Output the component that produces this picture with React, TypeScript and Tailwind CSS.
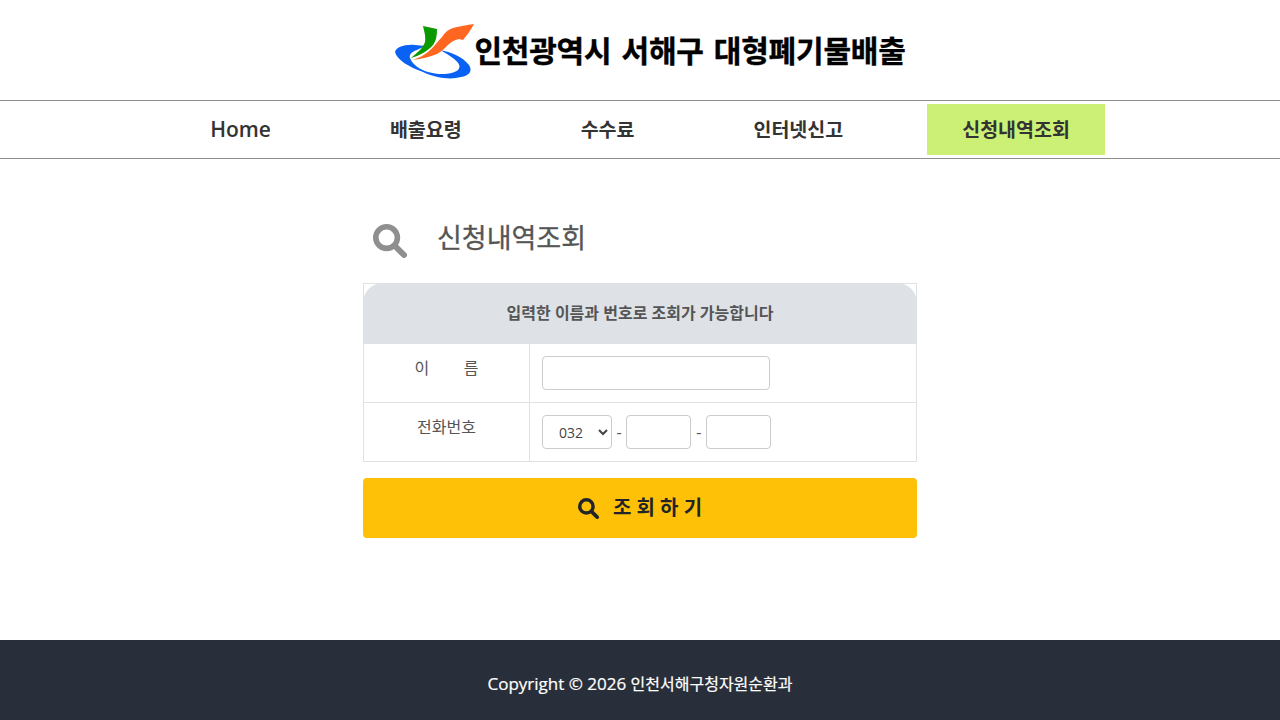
const font = "[font-family:'Open_Sans','Noto_Sans_CJK_KR',sans-serif]";

function SearchIcon({ size, className = "" }: { size: number; className?: string }) {
  return (
    <svg width={size} height={size} viewBox="0 0 34 34" fill="none" stroke="currentColor" className={`shrink-0 ${className}`}>
      <circle cx="13.6" cy="13.6" r="10.8" strokeWidth="5.6" />
      <path d="M22.5 22.5 L31 31" strokeWidth="6" strokeLinecap="round" />
    </svg>
  );
}

function Logo() {
  return (
    <svg width="80" height="58" viewBox="0 0 80 58" className="mt-[2px] shrink-0">
      <path fill="#0a62f5" d="M0 30 C1 25 10 22 20 23 L30 24 L22 28 C16 30 14 33 15 36 C17 42 25 48 33 50 C43 53 57 53 63 48 C68 43 60 37 52 32 L45 28 C56 30 68 35 74 43 C78 49 74 54 66 55 C56 58 40 56 28 50 C14 45 2 38 0 30 Z" />
      <path fill="#0a9a00" d="M28 4 L42 7 C42 14 41 19 38 23 C33 29 24 34 16 36 C22 31 28 26 30 20 C31 14 29 9 28 4 Z" />
      <path fill="#ff6620" d="M79 2 C76 8 72 13 68 18 L64 17 C59 18 56 20 53 23 C49 27 46 30 42 32 C35 35 26 37 18 38 C24 36 29 33 33 30 C39 25 42 20 47 15 C50 10 54 7 58 6 C65 4 72 3 79 2 Z" />
    </svg>
  );
}

function NavItem({ label, active = false, latin = false }: { label: string; active?: boolean; latin?: boolean }) {
  return (
    <a
      className={`flex h-[51px] items-center px-[35px] text-[#333] ${latin ? "text-[21px] font-semibold" : "text-[19.5px] font-bold"} ${active ? "bg-[#ccf075]" : ""}`}
    >
      {label}
    </a>
  );
}

export default function App() {
  return (
    <div className={`flex h-[720px] flex-col bg-white ${font}`}>
      <header className="flex h-[100px] items-center justify-center">
        <div className="flex items-center pl-[21px]">
          <Logo />
          <span className="ml-[-1px] mt-[1px] whitespace-nowrap text-[30px] leading-none font-bold tracking-[-0.2px] text-black [word-spacing:2.5px] [-webkit-text-stroke:0.4px_black]">
            인천광역시 서해구 대형폐기물배출
          </span>
        </div>
      </header>
      <nav className="flex h-[59px] items-center justify-center gap-[49px] border-y border-[#8c8c8c]">
        <NavItem label="Home" latin />
        <NavItem label="배출요령" />
        <NavItem label="수수료" />
        <NavItem label="인터넷신고" />
        <NavItem label="신청내역조회" active />
      </nav>
      <main className="mx-auto flex w-[554px] flex-1 flex-col pt-[55px]">
        <div className="flex h-[69px] items-start">
          <SearchIcon size={34} className="ml-[10px] mt-[10px] text-[#8f8f8f]" />
          <h2 className="ml-[30px] text-[27px] leading-[47px] font-normal text-[#555] [-webkit-text-stroke:0.3px_#555]">신청내역조회</h2>
        </div>
        <div className="border border-[#dee2e6]">
          <div className="-m-px flex h-[61px] items-center justify-center rounded-t-[20px] bg-[#dee2e6] pb-[2px] text-[16px] font-bold text-[#555]">
            입력한 이름과 번호로 조회가 가능합니다
          </div>
          <div className="flex h-[60px] border-b border-[#dee2e6]">
            <div className="w-[166px] border-r border-[#dee2e6] pt-[13px] text-center text-[16px] leading-[24px] text-[#555]">
              이&emsp;&thinsp;&emsp;름
            </div>
            <div className="pt-[13px] pl-[12px]">
              <input className="block h-[34px] w-[228px] rounded-[4px] border border-[#ccc] bg-white" />
            </div>
          </div>
          <div className="flex h-[58px]">
            <div className="w-[166px] border-r border-[#dee2e6] pt-[12px] text-center text-[16px] leading-[24px] text-[#555]">
              전화번호
            </div>
            <div className="flex items-start pt-[12px] pl-[12px] text-[16px] leading-[34px] text-[#555]">
              <select className="h-[34px] w-[70px] rounded-[4px] border border-[#ccc] bg-white pl-[12px] text-[14px] text-[#444]">
                <option>032</option>
              </select>
              <span className="mx-[4.5px]">-</span>
              <input className="block h-[34px] w-[65px] rounded-[4px] border border-[#ccc] bg-white" />
              <span className="mx-[5px]">-</span>
              <input className="block h-[34px] w-[65px] rounded-[4px] border border-[#ccc] bg-white" />
            </div>
          </div>
        </div>
        <button className="mt-[16px] flex h-[60px] items-center justify-center gap-[14px] rounded-[4px] bg-[#ffc107] text-[20px] font-bold text-[#212529]">
          <SearchIcon size={21} />
          <span>조 회 하 기</span>
        </button>
      </main>
      <footer className="flex h-[80px] items-center justify-center bg-[#292f3a] pt-[7px] text-[17px] font-medium text-white [-webkit-text-stroke:0.2px_white]">
        <span className="whitespace-pre">Copyright © 2026 </span>
        <span className="text-[16px] font-normal">인천서해구청자원순환과</span>
      </footer>
    </div>
  );
}
